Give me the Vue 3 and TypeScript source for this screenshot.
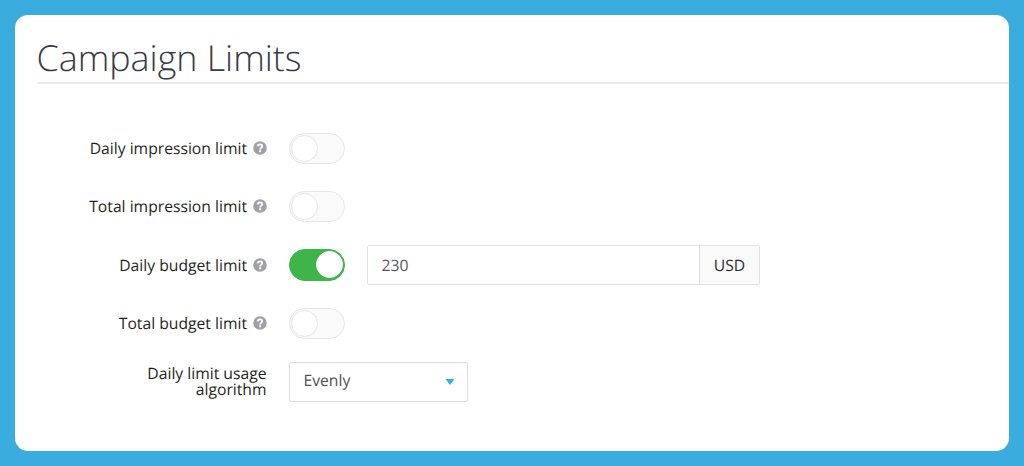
<script setup lang="ts">
import { ref } from 'vue'

interface LimitRow {
  id: string
  label: string
  enabled: boolean
  amount?: string
  currency?: string
}

const limits = ref<LimitRow[]>([
  { id: 'daily-impressions', label: 'Daily impression limit', enabled: false },
  { id: 'total-impressions', label: 'Total impression limit', enabled: false },
  { id: 'daily-budget', label: 'Daily budget limit', enabled: true, amount: '230', currency: 'USD' },
  { id: 'total-budget', label: 'Total budget limit', enabled: false },
])
</script>

<template>
  <main class="page">
    <section class="card">
      <h1 class="title">Campaign Limits</h1>
      <div class="rows">
        <div v-for="row in limits" :key="row.id" class="row">
          <div class="label">
            <span>{{ row.label }}</span>
            <svg class="help" viewBox="0 0 14 14" aria-hidden="true">
              <circle cx="7" cy="7" r="6.8" fill="#a0a0a7" />
              <path d="M4.7 5.4C4.9 2.7 9.2 2.8 9.2 5.2C9.2 6.8 7.1 6.6 7.1 8.5" fill="none" stroke="#fff" stroke-width="1.9" />
              <rect x="6.1" y="9.3" width="2" height="1.9" fill="#fff" />
            </svg>
          </div>
          <button
            type="button"
            class="toggle"
            :class="{ on: row.enabled }"
            role="switch"
            :aria-checked="row.enabled"
            :aria-label="row.label"
            @click="row.enabled = !row.enabled"
          >
            <span class="knob"></span>
          </button>
          <div v-if="row.enabled && row.currency" class="amount">
            <input v-model="row.amount" class="amount-input" type="text" :aria-label="row.label" />
            <span class="unit">{{ row.currency }}</span>
          </div>
        </div>
        <div class="row">
          <div class="label wrapped">Daily limit usage<br />algorithm</div>
          <div class="select">
            <span>Evenly</span>
            <svg class="caret" viewBox="0 0 10 6" aria-hidden="true">
              <path d="M0.5 0H9.5L5 6Z" fill="#38afe3" />
            </svg>
          </div>
        </div>
      </div>
    </section>
  </main>
</template>

<style>
body {
  margin: 0;
}
</style>

<style scoped>
.page {
  box-sizing: border-box;
  width: 1024px;
  height: 466px;
  padding: 15px 15.5px 15.5px 15px;
  background: #3aacdd;
  font-family: "Open Sans", "Noto Sans", sans-serif;
  font-size: 15.7px;
  text-rendering: geometricPrecision;
  color: #1f1f21;
}
.card {
  box-sizing: border-box;
  height: 100%;
  padding-left: 21.5px;
  border-radius: 13px;
  background: #fff;
  overflow: hidden;
}
.title {
  box-sizing: border-box;
  height: 69px;
  margin: 0;
  padding-top: 17px;
  border-bottom: 2px solid #ebebec;
  font-size: 35.8px;
  font-weight: 300;
  line-height: 52px;
  color: #3a3a46;
}
.rows {
  padding-top: 35.2px;
}
.row {
  display: flex;
  align-items: center;
  height: 58.3px;
}
.label {
  display: flex;
  align-items: center;
  justify-content: flex-end;
  width: 230px;
  margin-right: 22.5px;
  padding-bottom: 0.4px;
  line-height: 16px;
  white-space: nowrap;
}
.wrapped {
  display: block;
  text-align: right;
}
.help {
  width: 14px;
  height: 14px;
  margin-left: 5.5px;
}
.toggle {
  box-sizing: border-box;
  display: flex;
  align-items: center;
  width: 56px;
  height: 31.4px;
  padding: 0 1px;
  border: 1px solid #e5e5e6;
  border-radius: 16px;
  background: #fafafa;
}
.knob {
  box-sizing: border-box;
  width: 27px;
  height: 27px;
  border: 1px solid #e5e5e6;
  border-radius: 50%;
  background: #fff;
}
.toggle.on {
  justify-content: flex-end;
  border-color: #3db54a;
  background: #3db54a;
}
.on .knob {
  border-color: #fff;
}
.amount {
  box-sizing: border-box;
  display: flex;
  width: 393px;
  height: 40px;
  margin-left: 22px;
  border: 1px solid #e1e1e6;
  border-radius: 2px;
  overflow: hidden;
}
.amount-input {
  flex: 1;
  min-width: 0;
  padding: 1px 13.5px 0;
  border: 0;
  outline: 0;
  background: #fff;
  font: inherit;
  text-rendering: inherit;
  color: #55555d;
}
.unit {
  display: flex;
  align-items: center;
  justify-content: center;
  width: 59px;
  border-left: 1px solid #dcdce2;
  background: #fafafa;
  color: #2c2c2e;
}
.select {
  box-sizing: border-box;
  display: flex;
  align-items: center;
  justify-content: space-between;
  width: 179px;
  height: 40px;
  padding: 0 12px 3.5px 13.5px;
  border: 1px solid #dcdce5;
  border-radius: 2px;
  color: #505053;
}
.caret {
  width: 10px;
  height: 6px;
  margin-top: 4.5px;
}
</style>
